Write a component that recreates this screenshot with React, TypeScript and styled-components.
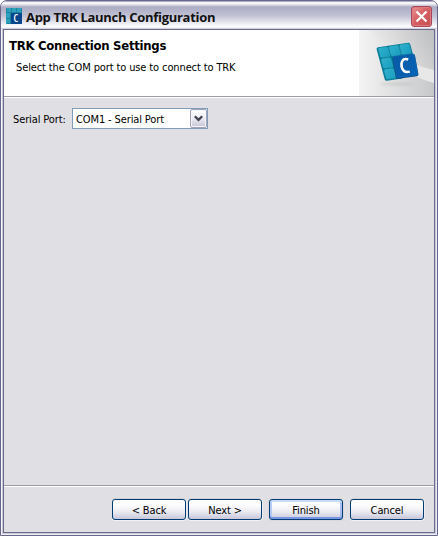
import React from "react";
import styled, { createGlobalStyle } from "styled-components";

const GlobalStyle = createGlobalStyle`
  body { margin: 0; background: #fff; overflow: hidden; }
  * { box-sizing: border-box; }
`;

const Frame = styled.div`
  width: 438px;
  height: 536px;
  border: 1px solid #68678b;
  border-radius: 7px 7px 0 0;
  background: #c9c9da;
  box-shadow: inset 1px 0 #f4f4fa, inset -1px 0 #e9e9f2, inset 0 -1px #f0f0f7;
  padding: 0 2px 2px;
  display: flex;
  flex-direction: column;
  overflow: hidden;
  color: #000;
  font-family: "DejaVu Sans Condensed", "DejaVu Sans", sans-serif;
  font-stretch: condensed;
`;

const TitleBar = styled.header`
  height: 28px;
  flex: none;
  margin: 0 -2px;
  padding: 1px 5px 0 5px;
  display: flex;
  align-items: center;
  background: linear-gradient(#77779a 0, #e8e8f0 1px, #fff 2px, #d8d8e4 4px, #adadc5 6px, #b2b2c9 9px, #c3c3d5 15px, #dedee8 20px, #fafafd 25px, #fff 26px, #c6c6d8 28px);
`;

const Title = styled.h1`
  margin: 0 auto 0 4px;
  padding-top: 3px;
  font: 700 13px/20px "Open Sans", sans-serif;
  letter-spacing: -0.3px;
  white-space: nowrap;
  color: #111;
`;

const CloseButton = styled.button`
  width: 21px;
  height: 21px;
  padding: 0;
  margin-top: 1px;
  border: 1px solid #a8465a;
  border-radius: 3px;
  display: grid;
  place-items: center;
  background: linear-gradient(135deg, #e89494, #d76164 45%, #c74b50);
  box-shadow: inset 0 0 0 1px #de7a7d;
`;

const Client = styled.main`
  flex: 1;
  min-height: 0;
  border: 1px solid #6a6a8c;
  background: #e0dfe3;
  display: flex;
  flex-direction: column;
`;

const Banner = styled.section`
  height: 68px;
  flex: none;
  display: flex;
  justify-content: space-between;
  background: #fff;
  border-bottom: 1px solid #fff;
  box-shadow: inset 0 -1px #9c9ca2;
`;

const BannerText = styled.div`
  padding: 7px 0 0 5px;
  white-space: nowrap;
`;

const Heading = styled.h2`
  margin: 0;
  font-size: 13px;
  line-height: 17px;
  font-weight: 700;
  letter-spacing: -0.28px;
`;

const Description = styled.p`
  margin: 6px 0 0 7px;
  font-size: 11px;
  line-height: 15px;
  letter-spacing: -0.12px;
`;

const Form = styled.section`
  flex: 1;
  padding: 10px 9px;
`;

const Field = styled.label`
  display: flex;
  align-items: center;
  font-size: 11px;
  line-height: 15px;
  letter-spacing: -0.12px;
`;

const FieldLabel = styled.span`
  width: 59px;
  white-space: nowrap;
  padding-top: 1px;
`;

const Select = styled.div`
  width: 136px;
  height: 21px;
  display: flex;
  align-items: center;
  justify-content: space-between;
  border: 1px solid #7f9db9;
  background: #fff;
  padding-left: 3px;
  white-space: nowrap;
`;

const SelectValue = styled.span`
  padding-top: 1px;
`;

const Arrow = styled.span`
  width: 17px;
  height: 19px;
  display: grid;
  place-items: center;
  border: 1px solid #a3a2b8;
  border-radius: 2px;
  background: linear-gradient(#fff, #eeeef5 45%, #c6c5d7);
  box-shadow: inset 0 0 0 1px #f5f5fa;
`;

const Footer = styled.footer`
  height: 47px;
  flex: none;
  display: flex;
  padding: 13px 0 0 108px;
  border-top: 1px solid #9d9ca3;
  box-shadow: inset 0 1px #fff;
`;

const Button = styled.button<{ $primary?: boolean; $gap?: number }>`
  width: 74px;
  height: 21px;
  padding: 1px 0 0;
  margin-left: ${(p) => p.$gap ?? 0}px;
  border: 1px solid #003c74;
  border-radius: 3px;
  background: linear-gradient(#fff, #fcfcfe 30%, #e8e8f0 65%, #c8c7da);
  box-shadow: ${(p) =>
    p.$primary
      ? "inset 0 2px #c7dbfb, inset 0 -2px #7795e5, inset 2px 0 #b3cbf3, inset -2px 0 #a6bff0, 0 0 0 1px #d8d8de"
      : "0 1px #f3f3f6, 1px 0 #eeeef2, 0 -1px #d2d1d8"};
  font: 11px/15px "DejaVu Sans Condensed", "DejaVu Sans", sans-serif;
  font-stretch: condensed;
  letter-spacing: -0.12px;
  color: #000;
`;

const Icon = styled.svg`
  display: block;
  flex: none;
`;

const Glyph = styled.text`
  font-family: "Open Sans", sans-serif;
  font-weight: 600;
  fill: #fff;
`;

const AppIcon = () => (
  <Icon width="16" height="16" viewBox="0 0 16 16">
    <rect width="16" height="16" rx="1" fill="#1a819f" />
    <g fill="#2ba0bc">
      <path d="M1 0h4v4H1zM6 0h4v4H6zM11 0h4v4h-4zM0 5h4v5H0zM0 11h4v4H0z" />
    </g>
    <rect x="5" y="5" width="11" height="11" rx="1" fill="#07458c" />
    <Glyph x="7.4" y="14" fontSize="10">C</Glyph>
  </Icon>
);

const tiles = [
  [0, 0], [11.3, 0], [22.6, 0],
  [0, 11.6], [0, 23.2],
];

const BannerArt = () => (
  <Icon width="75" height="66" viewBox="0 0 75 66">
    <defs>
      <linearGradient id="sweep" x1="0" x2="1" y1=".35" y2="0">
        <stop offset="0" stopColor="#f0f0f0" />
        <stop offset=".45" stopColor="#d9d9da" />
        <stop offset="1" stopColor="#bdbec0" />
      </linearGradient>
      <linearGradient id="lower" x1="0" x2="1">
        <stop offset="0" stopColor="#f4f4f4" />
        <stop offset="1" stopColor="#c7c8ca" />
      </linearGradient>
      <linearGradient id="tile" x1="0" x2="1" y1="0" y2="1">
        <stop offset="0" stopColor="#31b0cd" />
        <stop offset="1" stopColor="#189dbf" />
      </linearGradient>
      <linearGradient id="blue" x1="0" x2="1" y1="0" y2="1">
        <stop offset="0" stopColor="#0759a5" />
        <stop offset="1" stopColor="#0863b7" />
      </linearGradient>
      <filter id="soft" x="-50%" y="-200%" width="200%" height="500%">
        <feGaussianBlur stdDeviation="1.3" />
      </filter>
    </defs>
    <rect width="75" height="66" fill="url(#lower)" />
    <path d="M10 0H75V42Q50 39 30 23Q20 15 10 0Z" fill="url(#sweep)" />
    <path d="M10 0Q24 28 75 40V53Q30 41 10 0Z" fill="#e8e8e9" />
    <ellipse cx="38" cy="54" rx="17" ry="2" fill="#aaa" opacity=".25" filter="url(#soft)" />
    <g transform="matrix(.94 -.14 .25 .93 19.3 18.2)">
      <path d="M0-1H32Q33.8-1 33.8 1V20L16 35H0Q-2 35-2 33V1Q-2-1 0-1Z" fill="#087d99" />
      {tiles.map(([x, y]) => (
        <rect key={`${x}-${y}`} x={x} y={y} width="9.8" height="10" rx="1.2" fill="url(#tile)" stroke="#35b1ca" strokeWidth=".4" />
      ))}
    </g>
    <g transform="matrix(.98 -.13 .18 .98 33.8 26.6)">
      <rect x="-.7" y="0" width="23" height="22.7" rx="2" fill="#064584" />
      <rect x=".3" y="0" width="21.5" height="21.5" rx="1.5" fill="url(#blue)" stroke="#1972b9" strokeWidth=".5" />
    </g>
    <path d="M49.2 29.5C43.5 27.2 41.5 32.5 42.9 37.7Q44.6 43.3 50.8 41.6" fill="none" stroke="#fff" strokeWidth="2.5" />
  </Icon>
);

export default function App() {
  return (
    <>
      <GlobalStyle />
      <Frame>
        <TitleBar>
          <AppIcon />
          <Title>App TRK Launch Configuration</Title>
          <CloseButton aria-label="Close">
            <Icon width="13" height="13" viewBox="0 0 13 13">
              <path d="M1.5 1.5 11.5 11.5M11.5 1.5 1.5 11.5" stroke="#fff" strokeWidth="2.2" />
            </Icon>
          </CloseButton>
        </TitleBar>
        <Client>
          <Banner>
            <BannerText>
              <Heading>TRK Connection Settings</Heading>
              <Description>Select the COM port to use to connect to TRK</Description>
            </BannerText>
            <BannerArt />
          </Banner>
          <Form>
            <Field>
              <FieldLabel>Serial Port:</FieldLabel>
              <Select>
                <SelectValue>COM1 - Serial Port</SelectValue>
                <Arrow>
                  <Icon width="9" height="7" viewBox="0 0 9 7">
                    <path d="m.8 1.2 3.7 3.7 3.7-3.7" fill="none" stroke="#414150" strokeWidth="2.3" />
                  </Icon>
                </Arrow>
              </Select>
            </Field>
          </Form>
          <Footer>
            <Button>&lt; Back</Button>
            <Button $gap={2}>Next &gt;</Button>
            <Button $gap={7} $primary>Finish</Button>
            <Button $gap={7}>Cancel</Button>
          </Footer>
        </Client>
      </Frame>
    </>
  );
}
